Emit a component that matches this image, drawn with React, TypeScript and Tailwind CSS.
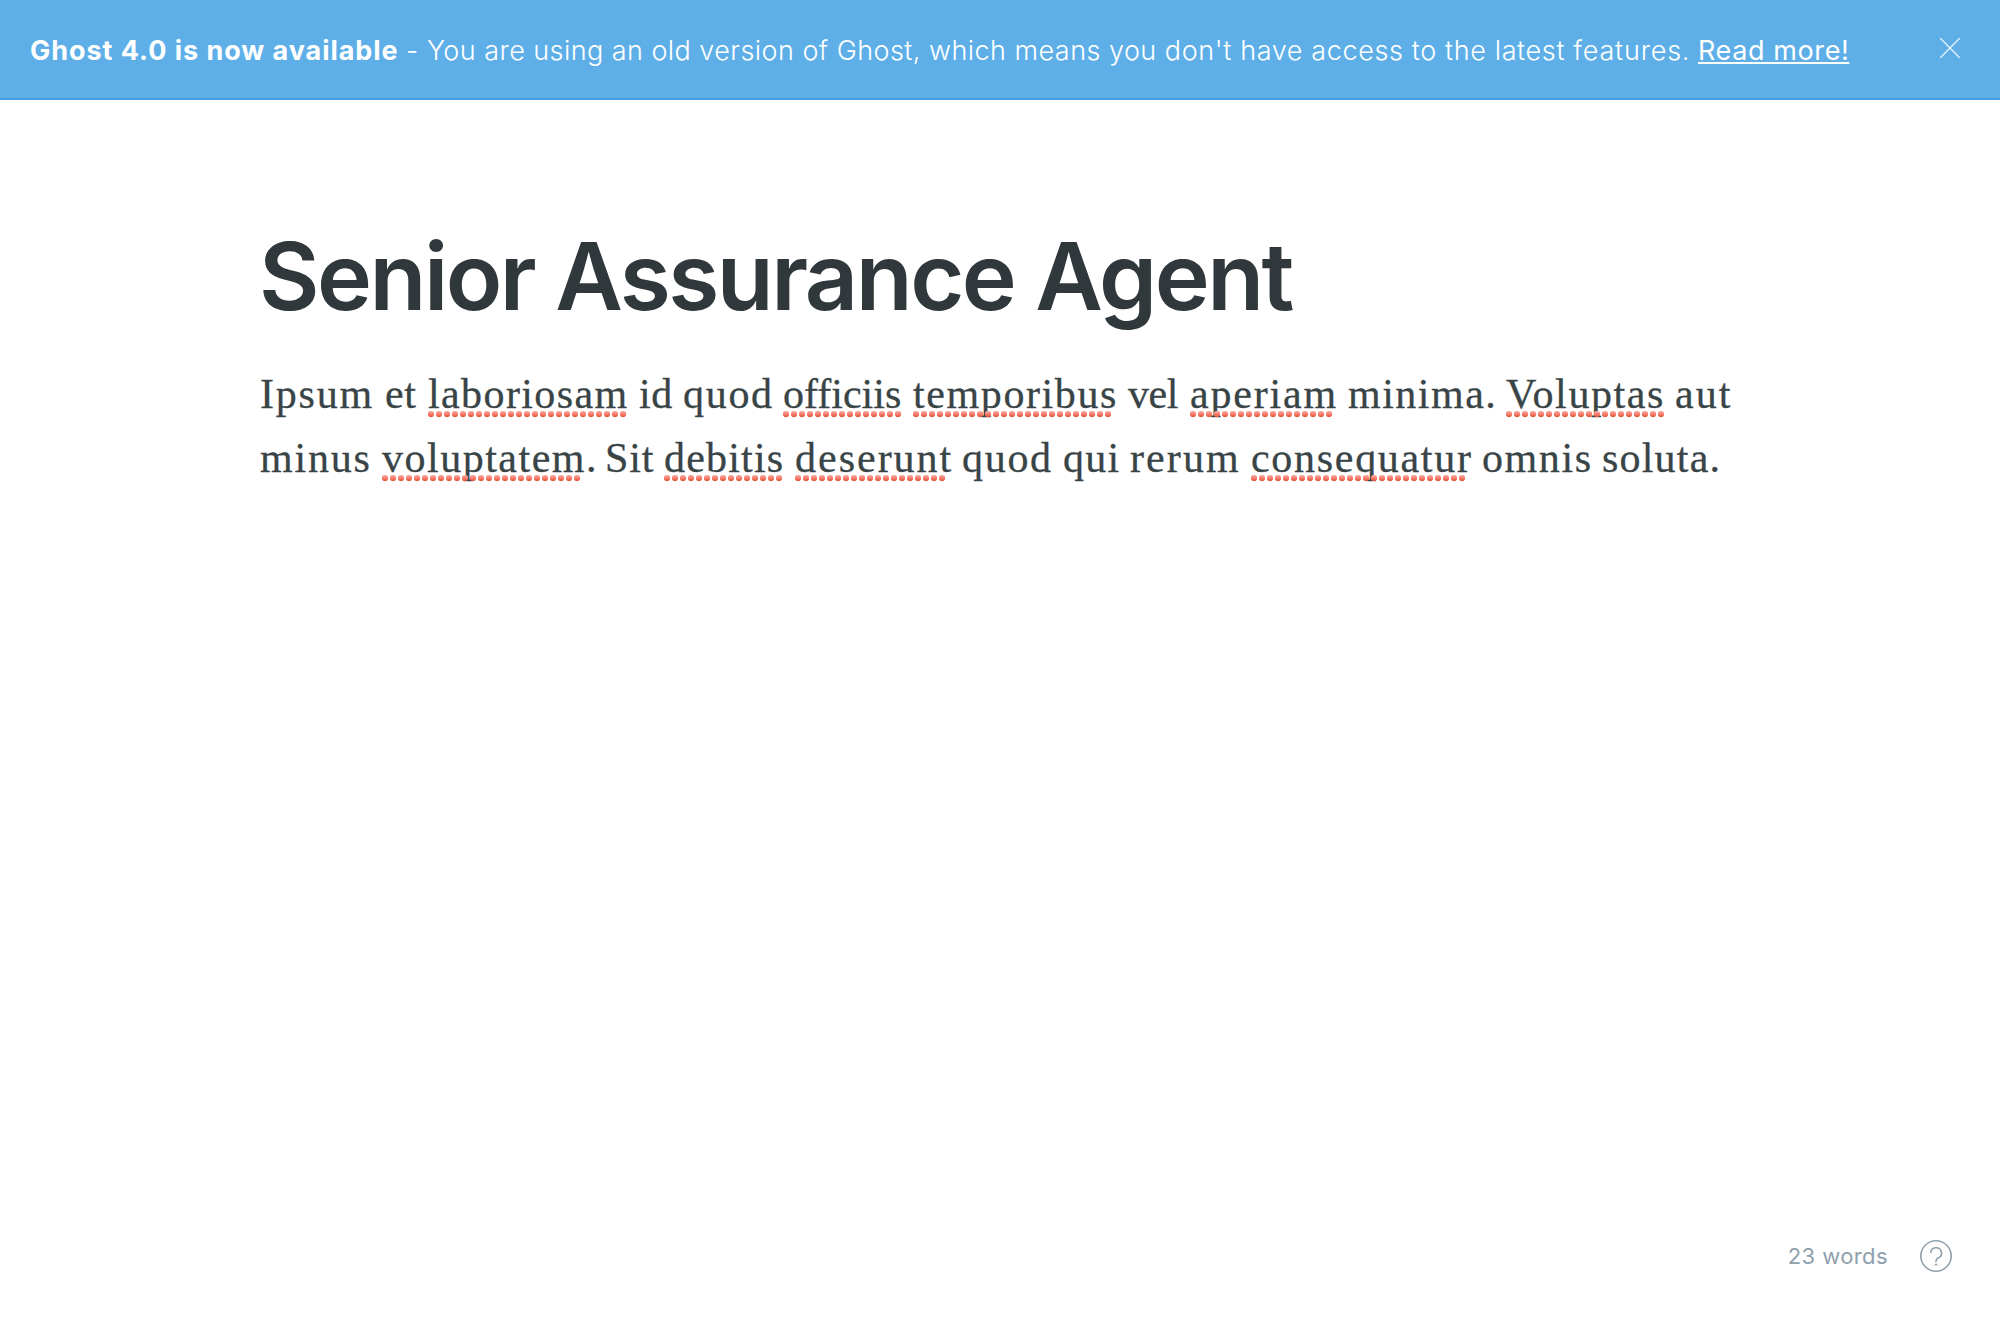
type Word = { text: string; box: string; dots?: string };

const lineOne: Word[] = [
  { text: "Ipsum", box: "w-[125px] tracking-[1.8px]" },
  { text: "et", box: "w-[43px] tracking-[0.7px]" },
  { text: "laboriosam", box: "w-[211px] tracking-[1.4px]", dots: "w-[200px]" },
  { text: "id", box: "w-[44px] tracking-[0.6px]" },
  { text: "quod", box: "w-[100px] tracking-[1.7px]" },
  { text: "officiis", box: "w-[130px] tracking-[0.01px]", dots: "w-[120px]" },
  { text: "temporibus", box: "w-[215px] tracking-[1.6px]", dots: "w-[200px]" },
  { text: "vel", box: "w-[62px] tracking-[-0.4px]" },
  { text: "aperiam", box: "w-[158px] tracking-[1.8px]", dots: "w-[144px]" },
  { text: "minima.", box: "w-[158px] tracking-[1.5px]" },
  { text: "Voluptas", box: "w-[169px] tracking-[1.6px]", dots: "w-[160px]" },
  { text: "aut", box: "w-[60px] tracking-[2px]" },
];

const lineTwo: Word[] = [
  { text: "minus", box: "w-[122px] tracking-[1.8px]" },
  { text: "voluptatem.", box: "w-[223px] tracking-[1.5px]", dots: "w-[200px]" },
  { text: "Sit", box: "w-[59px] tracking-[0.8px]" },
  { text: "debitis", box: "w-[131px] tracking-[1.2px]", dots: "w-[120px]" },
  { text: "deserunt", box: "w-[167px] tracking-[2px]", dots: "w-[152px]" },
  { text: "quod", box: "w-[101px] tracking-[1.7px]" },
  { text: "qui", box: "w-[67px] tracking-[1.2px]" },
  { text: "rerum", box: "w-[121px] tracking-[2.1px]" },
  { text: "consequatur", box: "w-[231px] tracking-[1.7px]", dots: "w-[216px]" },
  { text: "omnis", box: "w-[120px] tracking-[1.6px]" },
  { text: "soluta.", box: "w-[125px] tracking-[1.2px]" },
];

function Line({ words }: { words: Word[] }) {
  return (
    <span className="flex h-16 whitespace-nowrap">
      {words.map((word, i) => (
        <span key={i} className={`relative shrink-0 ${word.box}`}>
          {word.text}{" "}
          {word.dots && (
            <span
              className={`absolute left-0 top-[49px] h-[6px] bg-linear-to-b from-[#f7aea4] to-[#ee4a34] mask-[radial-gradient(circle_at_3px_3px,#000_2.8px,transparent_3.6px)] mask-size-[8px_6px] mask-repeat-x ${word.dots}`}
            />
          )}
        </span>
      ))}
    </span>
  );
}

export default function App() {
  return (
    <div className="flex h-screen flex-col bg-white font-['Inter',sans-serif]">
      <header className="flex h-[100px] shrink-0 items-center justify-between border-b-2 border-[#459cde] bg-[#5eafe8] pr-10 pl-[30px] text-white">
        <p className="flex whitespace-pre pt-[3px] text-[27px] leading-10 font-light">
          <b className="w-[376px] font-bold tracking-[0.95px]">Ghost 4.0 is now available</b>
          <span className="w-[21px]">-</span>
          <span className="w-[1271px]">
            <span className="tracking-[0.44px]">You are using an old version of Ghost, </span>
            <span className="tracking-[0.46px]">which means you </span>
            <span className="tracking-[0.62px]">don't have access to the latest </span>
            <span className="tracking-[0.8px]">features.</span>
          </span>
          <a href="#" className="font-normal tracking-[0.6px] underline decoration-2 underline-offset-[2px]">
            Read more!
          </a>
        </p>
        <button aria-label="Close" className="-mt-[2px]">
          <svg width="20" height="20" viewBox="0 0 20 20" fill="none" stroke="currentColor" strokeWidth="1.2">
            <path d="M.3.3l19.4 19.4M19.7.3L.3 19.7" />
          </svg>
        </button>
      </header>

      <main className="flex-1 pt-[116px] pl-[259px]">
        <h1 className="whitespace-nowrap text-[93px] leading-[120px] font-semibold tracking-[-2.5px] text-[#30383c]">
          Senior Assurance Agent
        </h1>
        <p className="mt-[26px] pl-px font-['Liberation_Serif',serif] text-[42px] leading-16 text-[#394447] [-webkit-text-stroke:0.3px_#394447]">
          <Line words={lineOne} />
          <Line words={lineTwo} />
        </p>
      </main>

      <footer className="flex h-32 shrink-0 items-center justify-end gap-[32px] pr-12 text-[#8ea0ac]">
        <span className="text-[22px] tracking-[0.4px]">23 words</span>
        <svg width="32" height="32" viewBox="0 0 32 32" fill="none" stroke="currentColor" strokeWidth="1.6">
          <circle cx="16" cy="16" r="15.2" />
          <path d="M10.7 13a5.4 5.4 0 1 1 7.5 5.1c-1.5.6-2.2 1.4-2.2 2.9v.9" />
          <circle cx="16" cy="24.6" r="1.1" fill="currentColor" stroke="none" />
        </svg>
      </footer>
    </div>
  );
}
